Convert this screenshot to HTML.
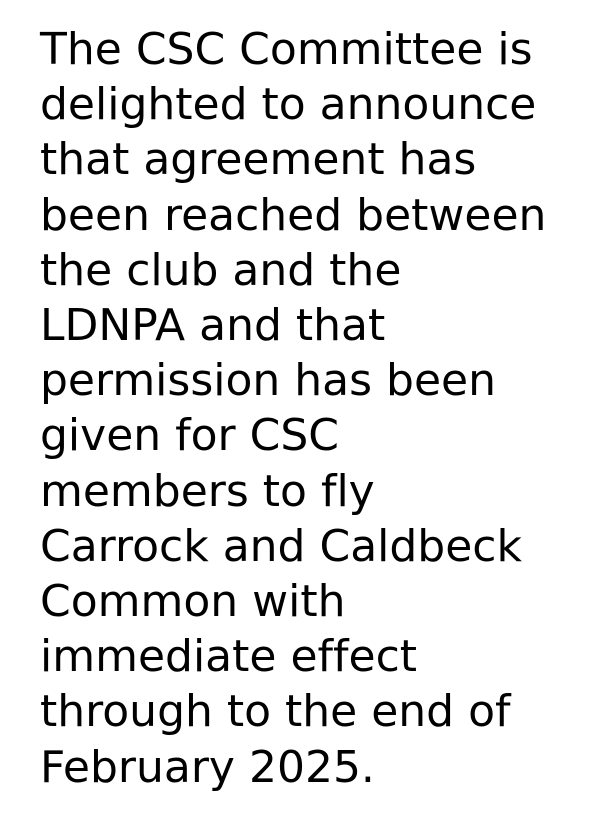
<!DOCTYPE html>
<html><head><meta charset="utf-8"><style>
html,body{margin:0;padding:0;background:#fff;width:591px;height:816px;overflow:hidden}
.t{position:absolute;left:40px;top:22px;font-family:"DejaVu Sans","Liberation Sans",sans-serif;font-size:44px;line-height:55.2px;color:#000;white-space:pre;font-variant-ligatures:none;font-feature-settings:"liga" 0}
</style></head><body>
<div class="t">The CSC Committee is
delighted to announce
that agreement has
been reached between
the club and the
LDNPA and that
permission has been
given for CSC
members to fly
Carrock and Caldbeck
Common with
immediate effect
through to the end of
February 2025.</div>
</body></html>
